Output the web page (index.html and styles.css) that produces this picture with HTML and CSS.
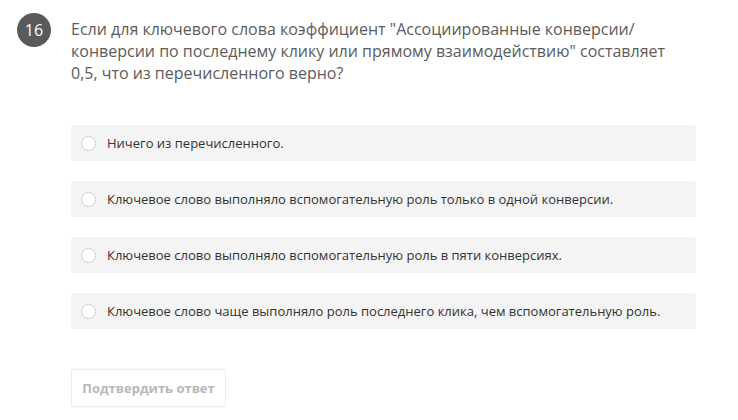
FILE: index.html
```html
<!DOCTYPE html>
<html lang="ru">
<head>
<meta charset="utf-8">
<link rel="stylesheet" href="styles.css">
</head>
<body>
<div class="question">
  <div class="badge">16</div>
  <div class="content">
    <p class="qtext">Если для ключевого слова коэффициент "Ассоциированные конверсии/ конверсии по последнему клику или прямому взаимодействию" составляет 0,5, что из перечисленного верно?</p>
    <ul class="options">
      <li class="option"><span class="radio"></span><span class="label">Ничего из перечисленного.</span></li>
      <li class="option"><span class="radio"></span><span class="label">Ключевое слово выполняло вспомогательную роль только в одной конверсии.</span></li>
      <li class="option"><span class="radio"></span><span class="label">Ключевое слово выполняло вспомогательную роль в пяти конверсиях.</span></li>
      <li class="option"><span class="radio"></span><span class="label">Ключевое слово чаще выполняло роль последнего клика, чем вспомогательную роль.</span></li>
    </ul>
    <button class="submit">Подтвердить ответ</button>
  </div>
</div>
</body>
</html>
```
FILE: styles.css
```css
html, body {
  margin: 0;
  padding: 0;
  background: #fff;
}
body {
  font-family: "Open Sans", "Liberation Sans", sans-serif;
}
.question {
  display: flex;
  padding: 13px 42px 0 17px;
  gap: 20px;
}
.badge {
  flex: none;
  width: 34px;
  height: 34px;
  border-radius: 50%;
  background: #5a5a5a;
  color: #fff;
  font-size: 16px;
  line-height: 34px;
  text-align: center;
}
.content {
  flex: 1;
}
.qtext {
  margin: 5px 0 0;
  max-width: 605px;
  font-size: 16px;
  line-height: 22px;
  color: #5c5c5c;
}
.options {
  list-style: none;
  margin: 41px 0 0;
  padding: 0;
  display: flex;
  flex-direction: column;
  gap: 20px;
}
.option {
  height: 36px;
  background: #f4f4f4;
  border-radius: 2px;
  display: flex;
  align-items: center;
  padding-left: 10px;
  gap: 11px;
}
.radio {
  width: 13px;
  height: 13px;
  border: 1px solid #cfcfcf;
  border-radius: 50%;
  background: #fff;
  flex: none;
}
.label {
  font-size: 13px;
  color: #333;
}
.submit {
  margin-top: 40px;
  width: 155px;
  height: 38px;
  background: #fff;
  border: 1px solid #ececec;
  border-radius: 2px;
  font-family: "Open Sans", "Liberation Sans", sans-serif;
  font-weight: bold;
  font-size: 13px;
  color: #b8b8b8;
  padding: 0;
}
```
